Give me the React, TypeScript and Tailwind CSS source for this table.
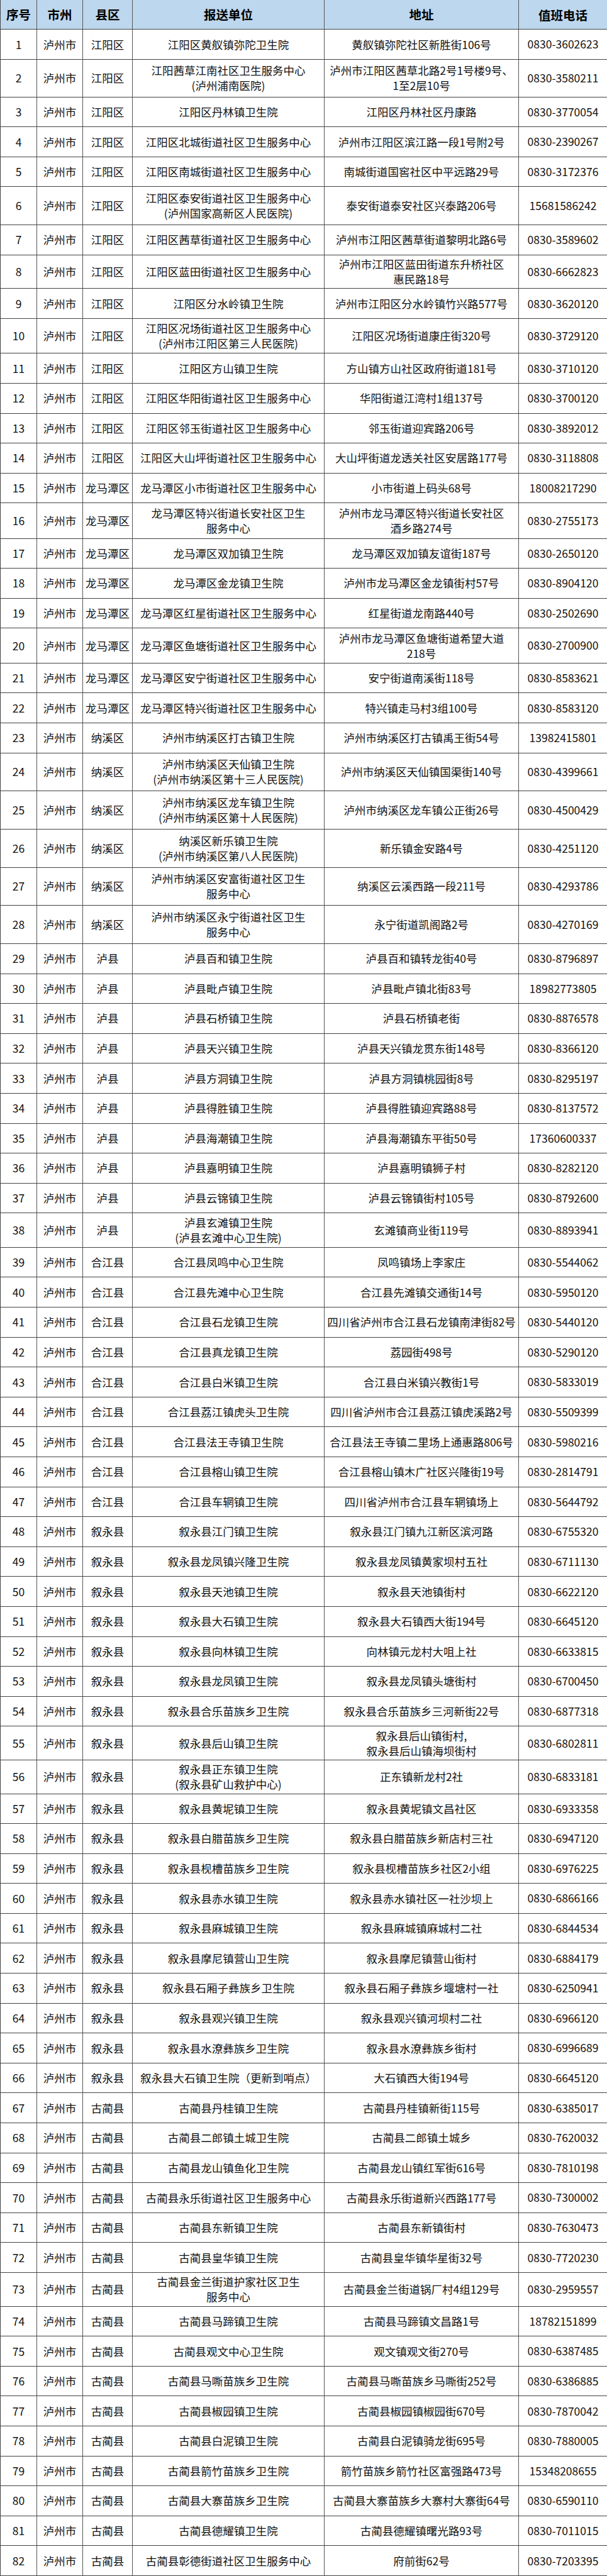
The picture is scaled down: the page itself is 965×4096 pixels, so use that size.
import React from 'react';

type Row = [string, string, string, string, number?];

// county, unit, address, phone, row height (reference px; default single line)
const ROWS: Row[] = [
  ['江阳区', '江阳区黄舣镇弥陀卫生院', '黄舣镇弥陀社区新胜街106号', '0830-3602623'],
  ['江阳区', '江阳茜草江南社区卫生服务中心\n(泸州浦南医院)', '泸州市江阳区茜草北路2号1号楼9号、\n1至2层10号', '0830-3580211', 67],
  ['江阳区', '江阳区丹林镇卫生院', '江阳区丹林社区丹康路', '0830-3770054'],
  ['江阳区', '江阳区北城街道社区卫生服务中心', '泸州市江阳区滨江路一段1号附2号', '0830-2390267'],
  ['江阳区', '江阳区南城街道社区卫生服务中心', '南城街道国窖社区中平远路29号', '0830-3172376'],
  ['江阳区', '江阳区泰安街道社区卫生服务中心\n(泸州国家高新区人民医院)', '泰安街道泰安社区兴泰路206号', '15681586242', 68],
  ['江阳区', '江阳区茜草街道社区卫生服务中心', '泸州市江阳区茜草街道黎明北路6号', '0830-3589602'],
  ['江阳区', '江阳区蓝田街道社区卫生服务中心', '泸州市江阳区蓝田街道东升桥社区\n惠民路18号', '0830-6662823', 60],
  ['江阳区', '江阳区分水岭镇卫生院', '泸州市江阳区分水岭镇竹兴路577号', '0830-3620120'],
  ['江阳区', '江阳区况场街道社区卫生服务中心\n(泸州市江阳区第三人民医院)', '江阳区况场街道康庄街320号', '0830-3729120', 62],
  ['江阳区', '江阳区方山镇卫生院', '方山镇方山社区政府街道181号', '0830-3710120'],
  ['江阳区', '江阳区华阳街道社区卫生服务中心', '华阳街道江湾村1组137号', '0830-3700120'],
  ['江阳区', '江阳区邻玉街道社区卫生服务中心', '邻玉街道迎宾路206号', '0830-3892012'],
  ['江阳区', '江阳区大山坪街道社区卫生服务中心', '大山坪街道龙透关社区安居路177号', '0830-3118808'],
  ['龙马潭区', '龙马潭区小市街道社区卫生服务中心', '小市街道上码头68号', '18008217290'],
  ['龙马潭区', '龙马潭区特兴街道长安社区卫生\n服务中心', '泸州市龙马潭区特兴街道长安社区\n酒乡路274号', '0830-2755173', 63],
  ['龙马潭区', '龙马潭区双加镇卫生院', '龙马潭区双加镇友谊街187号', '0830-2650120'],
  ['龙马潭区', '龙马潭区金龙镇卫生院', '泸州市龙马潭区金龙镇街村57号', '0830-8904120'],
  ['龙马潭区', '龙马潭区红星街道社区卫生服务中心', '红星街道龙南路440号', '0830-2502690'],
  ['龙马潭区', '龙马潭区鱼塘街道社区卫生服务中心', '泸州市龙马潭区鱼塘街道希望大道\n218号', '0830-2700900', 62],
  ['龙马潭区', '龙马潭区安宁街道社区卫生服务中心', '安宁街道南溪街118号', '0830-8583621'],
  ['龙马潭区', '龙马潭区特兴街道社区卫生服务中心', '特兴镇走马村3组100号', '0830-8583120'],
  ['纳溪区', '泸州市纳溪区打古镇卫生院', '泸州市纳溪区打古镇禹王街54号', '13982415801'],
  ['纳溪区', '泸州市纳溪区天仙镇卫生院\n(泸州市纳溪区第十三人民医院)', '泸州市纳溪区天仙镇国渠街140号', '0830-4399661', 68],
  ['纳溪区', '泸州市纳溪区龙车镇卫生院\n(泸州市纳溪区第十人民医院)', '泸州市纳溪区龙车镇公正街26号', '0830-4500429', 68],
  ['纳溪区', '纳溪区新乐镇卫生院\n(泸州市纳溪区第八人民医院)', '新乐镇金安路4号', '0830-4251120', 68],
  ['纳溪区', '泸州市纳溪区安富街道社区卫生\n服务中心', '纳溪区云溪西路一段211号', '0830-4293786', 68],
  ['纳溪区', '泸州市纳溪区永宁街道社区卫生\n服务中心', '永宁街道凯阁路2号', '0830-4270169', 68],
  ['泸县', '泸县百和镇卫生院', '泸县百和镇转龙街40号', '0830-8796897'],
  ['泸县', '泸县毗卢镇卫生院', '泸县毗卢镇北街83号', '18982773805'],
  ['泸县', '泸县石桥镇卫生院', '泸县石桥镇老街', '0830-8876578'],
  ['泸县', '泸县天兴镇卫生院', '泸县天兴镇龙贯东街148号', '0830-8366120'],
  ['泸县', '泸县方洞镇卫生院', '泸县方洞镇桃园街8号', '0830-8295197'],
  ['泸县', '泸县得胜镇卫生院', '泸县得胜镇迎宾路88号', '0830-8137572'],
  ['泸县', '泸县海潮镇卫生院', '泸县海潮镇东平街50号', '17360600337'],
  ['泸县', '泸县嘉明镇卫生院', '泸县嘉明镇狮子村', '0830-8282120'],
  ['泸县', '泸县云锦镇卫生院', '泸县云锦镇街村105号', '0830-8792600'],
  ['泸县', '泸县玄滩镇卫生院\n(泸县玄滩中心卫生院)', '玄滩镇商业街119号', '0830-8893941', 61],
  ['合江县', '合江县凤鸣中心卫生院', '凤鸣镇场上李家庄', '0830-5544062'],
  ['合江县', '合江县先滩中心卫生院', '合江县先滩镇交通街14号', '0830-5950120'],
  ['合江县', '合江县石龙镇卫生院', '四川省泸州市合江县石龙镇南津街82号', '0830-5440120'],
  ['合江县', '合江县真龙镇卫生院', '荔园街498号', '0830-5290120'],
  ['合江县', '合江县白米镇卫生院', '合江县白米镇兴教街1号', '0830-5833019'],
  ['合江县', '合江县荔江镇虎头卫生院', '四川省泸州市合江县荔江镇虎溪路2号', '0830-5509399'],
  ['合江县', '合江县法王寺镇卫生院', '合江县法王寺镇二里场上通惠路806号', '0830-5980216'],
  ['合江县', '合江县榕山镇卫生院', '合江县榕山镇木广社区兴隆街19号', '0830-2814791'],
  ['合江县', '合江县车辋镇卫生院', '四川省泸州市合江县车辋镇场上', '0830-5644792'],
  ['叙永县', '叙永县江门镇卫生院', '叙永县江门镇九江新区滨河路', '0830-6755320'],
  ['叙永县', '叙永县龙凤镇兴隆卫生院', '叙永县龙凤镇黄家坝村五社', '0830-6711130'],
  ['叙永县', '叙永县天池镇卫生院', '叙永县天池镇街村', '0830-6622120'],
  ['叙永县', '叙永县大石镇卫生院', '叙永县大石镇西大街194号', '0830-6645120'],
  ['叙永县', '叙永县向林镇卫生院', '向林镇元龙村大咀上社', '0830-6633815'],
  ['叙永县', '叙永县龙凤镇卫生院', '叙永县龙凤镇头塘街村', '0830-6700450'],
  ['叙永县', '叙永县合乐苗族乡卫生院', '叙永县合乐苗族乡三河新街22号', '0830-6877318'],
  ['叙永县', '叙永县后山镇卫生院', '叙永县后山镇街村,\n叙永县后山镇海坝街村', '0830-6802811', 60],
  ['叙永县', '叙永县正东镇卫生院\n(叙永县矿山救护中心)', '正东镇新龙村2社', '0830-6833181', 60],
  ['叙永县', '叙永县黄坭镇卫生院', '叙永县黄坭镇文昌社区', '0830-6933358'],
  ['叙永县', '叙永县白腊苗族乡卫生院', '叙永县白腊苗族乡新店村三社', '0830-6947120'],
  ['叙永县', '叙永县枧槽苗族乡卫生院', '叙永县枧槽苗族乡社区2小组', '0830-6976225'],
  ['叙永县', '叙永县赤水镇卫生院', '叙永县赤水镇社区一社沙坝上', '0830-6866166'],
  ['叙永县', '叙永县麻城镇卫生院', '叙永县麻城镇麻城村二社', '0830-6844534'],
  ['叙永县', '叙永县摩尼镇营山卫生院', '叙永县摩尼镇营山街村', '0830-6884179'],
  ['叙永县', '叙永县石厢子彝族乡卫生院', '叙永县石厢子彝族乡堰塘村一社', '0830-6250941'],
  ['叙永县', '叙永县观兴镇卫生院', '叙永县观兴镇河坝村二社', '0830-6966120'],
  ['叙永县', '叙永县水潦彝族乡卫生院', '叙永县水潦彝族乡街村', '0830-6996689'],
  ['叙永县', '叙永县大石镇卫生院（更新到哨点）', '大石镇西大街194号', '0830-6645120'],
  ['古蔺县', '古蔺县丹桂镇卫生院', '古蔺县丹桂镇新街115号', '0830-6385017'],
  ['古蔺县', '古蔺县二郎镇土城卫生院', '古蔺县二郎镇土城乡', '0830-7620032'],
  ['古蔺县', '古蔺县龙山镇鱼化卫生院', '古蔺县龙山镇红军街616号', '0830-7810198'],
  ['古蔺县', '古蔺县永乐街道社区卫生服务中心', '古蔺县永乐街道新兴西路177号', '0830-7300002'],
  ['古蔺县', '古蔺县东新镇卫生院', '古蔺县东新镇街村', '0830-7630473'],
  ['古蔺县', '古蔺县皇华镇卫生院', '古蔺县皇华镇华星街32号', '0830-7720230'],
  ['古蔺县', '古蔺县金兰街道护家社区卫生\n服务中心', '古蔺县金兰街道锅厂村4组129号', '0830-2959557', 60],
  ['古蔺县', '古蔺县马蹄镇卫生院', '古蔺县马蹄镇文昌路1号', '18782151899'],
  ['古蔺县', '古蔺县观文中心卫生院', '观文镇观文街270号', '0830-6387485'],
  ['古蔺县', '古蔺县马嘶苗族乡卫生院', '古蔺县马嘶苗族乡马嘶街252号', '0830-6386885'],
  ['古蔺县', '古蔺县椒园镇卫生院', '古蔺县椒园镇椒园街670号', '0830-7870042'],
  ['古蔺县', '古蔺县白泥镇卫生院', '古蔺县白泥镇骑龙街695号', '0830-7880005'],
  ['古蔺县', '古蔺县箭竹苗族乡卫生院', '箭竹苗族乡箭竹社区富强路473号', '15348208655'],
  ['古蔺县', '古蔺县大寨苗族乡卫生院', '古蔺县大寨苗族乡大寨村大寨街64号', '0830-6590110'],
  ['古蔺县', '古蔺县德耀镇卫生院', '古蔺县德耀镇曙光路93号', '0830-7011015'],
  ['古蔺县', '古蔺县彰德街道社区卫生服务中心', '府前街62号', '0830-7203395'],
];

// reference row height -> scaled class
const HEIGHT: Record<number, string> = {
  53: 'h-[47.6px]',
  60: 'h-[53.6px]',
  61: 'h-[54.5px]',
  62: 'h-[55.4px]',
  63: 'h-[56.3px]',
  67: 'h-[59.8px]',
  68: 'h-[60.7px]',
};

const GRID = 'grid grid-cols-[58px_73px_79px_305px_309px_1fr] border-b border-[#444]';
const CELL = 'flex items-center justify-center text-center whitespace-pre border-r border-[#555] leading-[24px]';

export default function App() {
  return (
    <div className="w-[965px] bg-white text-[#111] border-l border-[#444] font-['Noto_Sans_CJK_SC','Noto_Sans',sans-serif]">
      <div className={`${GRID} h-[47.3px] bg-[#bdd7ee] text-[19.5px] font-bold text-black`}>
        {['序号', '市州', '县区', '报送单位', '地址', '值班电话'].map((h, i) => (
          <div key={h} className={i === 5 ? 'flex items-center justify-center' : CELL}>
            {h}
          </div>
        ))}
      </div>

      {ROWS.map(([county, unit, addr, phone, h], i) => (
        <div key={i} className={`${GRID} ${HEIGHT[h ?? 53]} text-[17.5px]`}>
          <div className={CELL}>{i + 1}</div>
          <div className={CELL}>泸州市</div>
          <div className={CELL}>{county}</div>
          <div className={CELL}>{unit}</div>
          <div className={CELL}>{addr}</div>
          <div className="flex items-center justify-center">{phone}</div>
        </div>
      ))}
    </div>
  );
}
